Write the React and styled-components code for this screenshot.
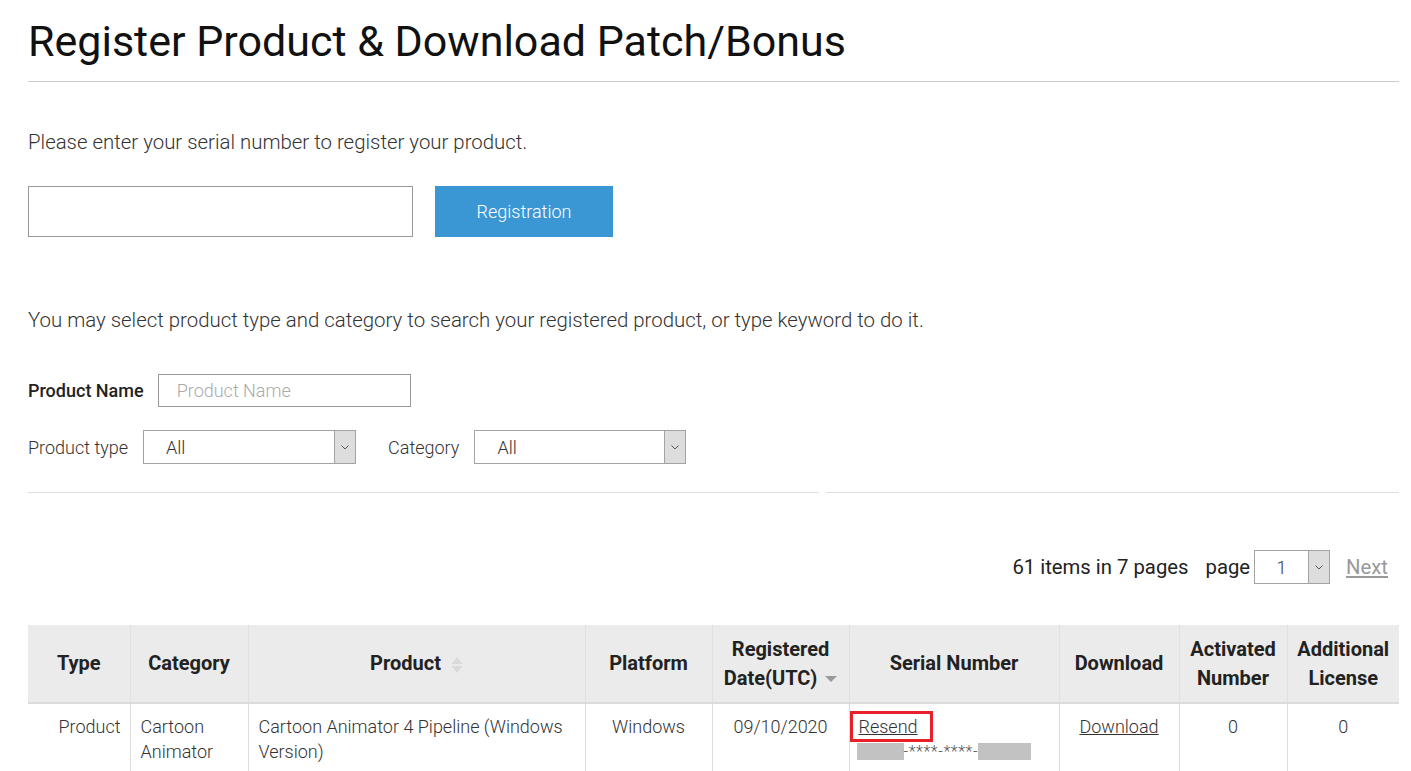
import React from "react";
import styled, { createGlobalStyle } from "styled-components";

const GlobalStyle = createGlobalStyle`
  html, body { margin: 0; padding: 0; background: #fff; }
  body { font-family: Roboto, "Liberation Sans", Arial, sans-serif; color: #333; }
  * { box-sizing: border-box; }
`;

const Page = styled.div`
  padding: 0 12px 40px 28px;
`;

const Title = styled.h1`
  margin: 0;
  padding: 17px 0 16px;
  font-size: 43px;
  line-height: 48px;
  font-weight: 400;
  color: #111;
  border-bottom: 1px solid #ccc;
`;

const Intro = styled.p`
  margin: ${(p) => p.$top}px 0 0;
  font-size: 20.4px;
  line-height: 26px;
  font-weight: 300;
  color: #333;
`;

const RegisterRow = styled.div`
  display: flex;
  gap: 22px;
  margin-top: 31px;
`;

const SerialInput = styled.input`
  width: 385px;
  height: 51px;
  border: 1px solid #999;
  padding: 0 12px;
  font: inherit;
  outline: none;
`;

const RegButton = styled.button`
  width: 178px;
  height: 51px;
  border: none;
  background: #3b97d3;
  color: #fff;
  font-family: Roboto, sans-serif;
  font-size: 18px;
  font-weight: 300;
  cursor: pointer;
`;

const FilterRow = styled.div`
  display: flex;
  align-items: center;
  margin-top: ${(p) => p.$top}px;
`;

const BoldLabel = styled.label`
  font-size: 18px;
  font-weight: 500;
  color: #222;
  margin-right: 14px;
`;

const Label = styled.label`
  font-size: 18px;
  font-weight: 300;
  color: #333;
  margin-right: 15px;
  margin-left: ${(p) => p.$left || 0}px;
`;

const NameInput = styled.input`
  width: 253px;
  height: 33px;
  border: 1px solid #999;
  padding: 0 18px;
  font-family: Roboto, sans-serif;
  font-size: 18px;
  font-weight: 300;
  outline: none;
  &::placeholder { color: #aaa; }
`;

const Select = styled.div`
  display: flex;
  width: ${(p) => p.$w}px;
  height: 34px;
  border: 1px solid #a3a3a3;
  background: #fff;
`;

const SelectValue = styled.span`
  flex: 1;
  display: flex;
  align-items: center;
  justify-content: ${(p) => (p.$center ? "center" : "flex-start")};
  padding-left: ${(p) => (p.$center ? 0 : 22)}px;
  font-size: 18px;
  font-weight: 300;
  color: #333;
`;

const SelectArrow = styled.span`
  width: 21px;
  display: flex;
  align-items: center;
  justify-content: center;
  background: #dddddd;
  border-left: 1px solid #a3a3a3;
`;

const Dividers = styled.div`
  display: grid;
  grid-template-columns: 791px 1fr;
  gap: 7px;
  margin-top: 28px;
`;

const Rule = styled.div`
  border-top: 1px solid #dedede;
`;

const Pager = styled.div`
  display: flex;
  justify-content: flex-end;
  align-items: center;
  margin-top: 57px;
  padding-right: 11px;
  font-size: 20.3px;
  color: #222;
`;

const PagerText = styled.span`
  margin-right: ${(p) => p.$mr}px;
`;

const NextLink = styled.a`
  margin-left: 16px;
  color: #999;
  text-decoration: underline;
`;

const Table = styled.table`
  width: 100%;
  margin-top: 41px;
  border-collapse: collapse;
  table-layout: fixed;
`;

const Th = styled.th`
  background: #ebebeb;
  height: 78px;
  padding: 0 4px;
  font-size: 20px;
  line-height: 29px;
  font-weight: 700;
  color: #222;
  text-align: center;
  vertical-align: middle;
  border-left: 1px solid #e0e0e0;
  border-bottom: 2px solid #dcdcdc;
  &:first-child { border-left: none; }
`;

const Td = styled.td`
  padding: 10px 10px 12px;
  font-size: 18px;
  line-height: 25px;
  font-weight: 300;
  color: #333;
  vertical-align: top;
  text-align: ${(p) => p.$align || "center"};
  border-left: 1px solid #dddddd;
  &:first-child { border-left: none; padding-right: 9px; }
`;

const UnderLink = styled.a`
  color: #333;
  text-decoration: underline;
`;

const Highlight = styled.span`
  display: inline-block;
  margin-left: -10px;
  margin-top: -4px;
  padding: 0 12px 0 6px;
  border: 3px solid #e8202a;
  line-height: 25px;
`;

const MaskLine = styled.div`
  display: flex;
  align-items: center;
  margin-top: 1px;
  margin-left: -3px;
  font-size: 16px;
  line-height: 17px;
  letter-spacing: 0.6px;
  color: #555;
`;

const Mask = styled.span`
  display: inline-block;
  width: ${(p) => p.$w}px;
  height: 17px;
  background: #c2c2c2;
`;

const SortIcon = styled.svg`
  vertical-align: middle;
  margin-left: 10px;
`;

const Chevron = () => (
  <svg width="8" height="5" viewBox="0 0 8 5">
    <path d="M0.5 0.5 L4 4 L7.5 0.5" fill="none" stroke="#555" strokeWidth="1" />
  </svg>
);

const FakeSelect = ({ w, value, center }) => (
  <Select $w={w}>
    <SelectValue $center={center}>{value}</SelectValue>
    <SelectArrow>
      <Chevron />
    </SelectArrow>
  </Select>
);

export default function App() {
  return (
    <Page>
      <GlobalStyle />
      <Title>Register Product &amp; Download Patch/Bonus</Title>

      <Intro $top={47}>Please enter your serial number to register your product.</Intro>
      <RegisterRow>
        <SerialInput type="text" />
        <RegButton>Registration</RegButton>
      </RegisterRow>

      <Intro $top={70}>
        You may select product type and category to search your registered product, or type keyword to do it.
      </Intro>

      <FilterRow $top={41}>
        <BoldLabel>Product Name</BoldLabel>
        <NameInput placeholder="Product Name" />
      </FilterRow>
      <FilterRow $top={23}>
        <Label>Product type</Label>
        <FakeSelect w={213} value="All" />
        <Label $left={32}>Category</Label>
        <FakeSelect w={212} value="All" />
      </FilterRow>

      <Dividers>
        <Rule />
        <Rule />
      </Dividers>

      <Pager>
        <PagerText $mr={17}>61 items in 7 pages</PagerText>
        <PagerText $mr={4}>page</PagerText>
        <FakeSelect w={76} value="1" center />
        <NextLink href="#">Next</NextLink>
      </Pager>

      <Table>
        <colgroup>
          <col style={{ width: 102 }} />
          <col style={{ width: 118 }} />
          <col style={{ width: 337 }} />
          <col style={{ width: 127 }} />
          <col style={{ width: 137 }} />
          <col style={{ width: 210 }} />
          <col style={{ width: 120 }} />
          <col style={{ width: 108 }} />
          <col style={{ width: 112 }} />
        </colgroup>
        <thead>
          <tr>
            <Th>Type</Th>
            <Th>Category</Th>
            <Th>
              Product
              <SortIcon width="12" height="18" viewBox="0 0 12 18">
                <path d="M6 1 L11.5 8 L0.5 8 Z" fill="#dadada" />
                <path d="M6 17 L11.5 10 L0.5 10 Z" fill="#dadada" />
              </SortIcon>
            </Th>
            <Th>Platform</Th>
            <Th>
              Registered
              <br />
              Date(UTC)
              <SortIcon width="12" height="8" viewBox="0 0 12 8" style={{ marginLeft: 8 }}>
                <path d="M0 1 L12 1 L6 7 Z" fill="#999" />
              </SortIcon>
            </Th>
            <Th>Serial Number</Th>
            <Th>Download</Th>
            <Th>
              Activated
              <br />
              Number
            </Th>
            <Th>
              Additional
              <br />
              License
            </Th>
          </tr>
        </thead>
        <tbody>
          <tr>
            <Td $align="right">Product</Td>
            <Td $align="left">Cartoon Animator</Td>
            <Td $align="left">Cartoon Animator 4 Pipeline (Windows Version)</Td>
            <Td>Windows</Td>
            <Td>09/10/2020</Td>
            <Td $align="left">
              <Highlight>
                <UnderLink href="#">Resend</UnderLink>
              </Highlight>
              <MaskLine>
                <Mask $w={47} />
                -****-****-
                <Mask $w={53} />
              </MaskLine>
            </Td>
            <Td>
              <UnderLink href="#">Download</UnderLink>
            </Td>
            <Td>0</Td>
            <Td>0</Td>
          </tr>
        </tbody>
      </Table>
    </Page>
  );
}
